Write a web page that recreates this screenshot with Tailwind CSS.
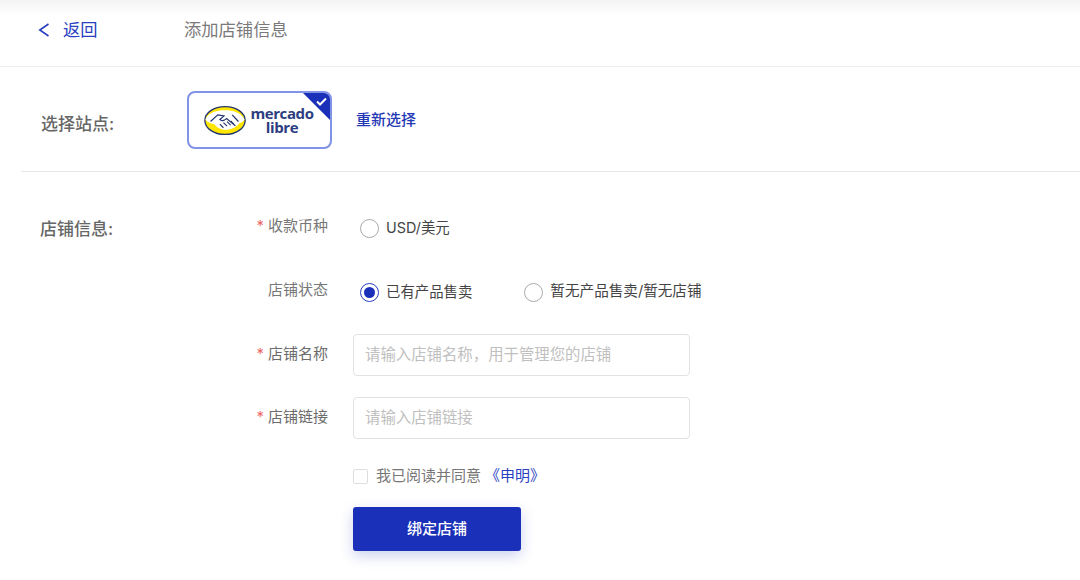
<!DOCTYPE html>
<html lang="zh-CN">
<head>
  <meta charset="UTF-8">
  <title>添加店铺信息</title>
  <script src="https://cdn.jsdelivr.net/npm/@tailwindcss/browser@4"></script>
</head>
<body class="bg-white font-['Inter','Noto_Sans_CJK_SC',sans-serif] text-[#333] overflow-hidden">
  <div class="w-[1080px] h-[580px] flex flex-col">
    <!-- header -->
    <header class="h-[67px] shrink-0 border-b border-[#ececec] bg-gradient-to-b from-[#f3f3f3] to-white to-[24%] flex items-center pb-[6px]">
      <a class="flex items-center w-[184px] pl-[38px] text-[#2a3fc0] text-[17.3px]">
        <svg class="w-[12px] h-[16px] mr-[13px]" viewBox="0 0 12 16" fill="none" stroke="#2a3fc0" stroke-width="1.6"><path d="M10.5 2 1.8 8l8.700 6"/></svg>
        返回
      </a>
      <span class="text-[17.3px] text-[#7a7a7a]">添加店铺信息</span>
    </header>

    <!-- site -->
    <section class="h-[105px] shrink-0 ml-[21px] border-b border-[#e8e8e8] flex items-start pt-[24px]">
      <div class="w-[166px] pl-[20px] pt-[21px] text-[17px] font-medium text-[#666]">选择站点:</div>
      <div class="relative w-[145px] h-[58px] rounded-[8px] border-2 border-[#8193e6] overflow-hidden flex items-center justify-center">
        <svg class="w-[44px] h-[31px] mr-[3px] -ml-[2px]" viewBox="0 0 42 30">
          <ellipse cx="21" cy="15" rx="19.5" ry="13.500" fill="#ffe600" stroke="#25366f" stroke-width="1.3"/>
          <path d="M2 14C5 7 13 5 21 5s15 2 19 9c-1.500 2-3 3-5 3.500-2 3.500-7 6-12 6.500-6 .5-10-2-12.500-5.500C7 18 4 16.500 2 14z" fill="#fff"/>
          <path d="M7 16 14 9.500l6 1-4 3.500c1.500 1.800 4 1.300 6.500-.8l8.500 6.800M28 9.500 34 16" fill="none" stroke="#25366f" stroke-width="1.200"/>
          <path d="M16 18.500l3.500 3.500M19.500 17l3.500 3.500M23 16l3.500 3.500M26.500 15.500l3 3" stroke="#25366f" stroke-width="1.100" fill="none"/>
        </svg>
        <div class="text-center text-[#2d3d80] font-['Open_Sans',sans-serif] font-bold text-[15px] leading-[14px] tracking-[-0.4px]">mercado<br>libre</div>
        <div class="absolute top-0 right-0 w-0 h-0 border-t-[27px] border-l-[27px] border-t-[#1a30b8] border-l-transparent"></div>
        <svg class="absolute top-[4px] right-[3px] w-[11px] h-[9px]" viewBox="0 0 11 9" fill="none" stroke="#fff" stroke-width="2"><path d="M1 4.500 4 7.500 10 1.500"/></svg>
      </div>
      <a class="ml-[24px] mt-[18px] text-[15px] font-medium text-[#2438b4]">重新选择</a>
    </section>

    <!-- shop info -->
    <section class="flex pt-[40px] pl-[40px]">
      <div class="w-[190px] text-[17px] font-medium text-[#666] leading-[34px]">店铺信息:</div>
      <div class="flex flex-col">
        <div class="flex items-center h-[30px] mt-[1px]">
          <label class="w-[98px] -mt-[3px] text-right text-[15px] text-[#777]"><span class="text-[#ec6a69] mr-[4px]">*</span>收款币种</label>
          <span class="ml-[32px] w-[19px] h-[19px] rounded-full border border-[#aaa]"></span>
          <span class="ml-[7px] -mt-[1px] text-[14.4px] text-[#444]">USD/美元</span>
        </div>
        <div class="flex items-center h-[30px] mt-[34px]">
          <label class="w-[98px] -mt-[3px] text-right text-[15px] text-[#777]">店铺状态</label>
          <span class="ml-[32px] w-[19px] h-[19px] rounded-full border border-[#2a3fc0] flex items-center justify-center"><span class="w-[11px] h-[11px] rounded-full bg-[#1a30b8]"></span></span>
          <span class="ml-[7px] -mt-[1px] text-[14.4px] text-[#444]">已有产品售卖</span>
          <span class="ml-[52px] w-[19px] h-[19px] rounded-full border border-[#aaa]"></span>
          <span class="ml-[7px] -mt-[1px] text-[14.6px] text-[#444]">暂无产品售卖/暂无店铺</span>
        </div>
        <div class="flex items-center mt-[27px]">
          <label class="w-[98px] -mt-[2px] text-right text-[15px] text-[#6c6c6c]"><span class="text-[#ec6a69] mr-[4px]">*</span>店铺名称</label>
          <input class="ml-[25px] w-[337px] h-[42px] rounded-[4px] border border-[#e2e2e2] px-[11px] pb-[2px] text-[15.4px] placeholder:text-[#c0c0c0]" placeholder="请输入店铺名称，用于管理您的店铺">
        </div>
        <div class="flex items-center mt-[21px]">
          <label class="w-[98px] -mt-[2px] text-right text-[15px] text-[#6c6c6c]"><span class="text-[#ec6a69] mr-[4px]">*</span>店铺链接</label>
          <input class="ml-[25px] w-[337px] h-[42px] rounded-[4px] border border-[#e2e2e2] px-[11px] pb-[2px] text-[15.4px] placeholder:text-[#c0c0c0]" placeholder="请输入店铺链接">
        </div>
        <div class="flex items-center mt-[27px] ml-[123px]">
          <span class="w-[15px] h-[15px] rounded-[2px] border border-[#dedede]"></span>
          <span class="ml-[8px] -mt-[1px] text-[15px] text-[#777]">我已阅读并同意<span class="ml-[4px] text-[#2a3fc0]">《申明》</span></span>
        </div>
        <button class="mt-[19px] ml-[123px] w-[168px] h-[44px] pt-[2px] rounded-[3px] bg-[#1a30b8] text-white text-[15px] font-medium shadow-[0_5px_14px_rgba(26,48,184,0.22)]">绑定店铺</button>
      </div>
    </section>
  </div>
</body>
</html>
